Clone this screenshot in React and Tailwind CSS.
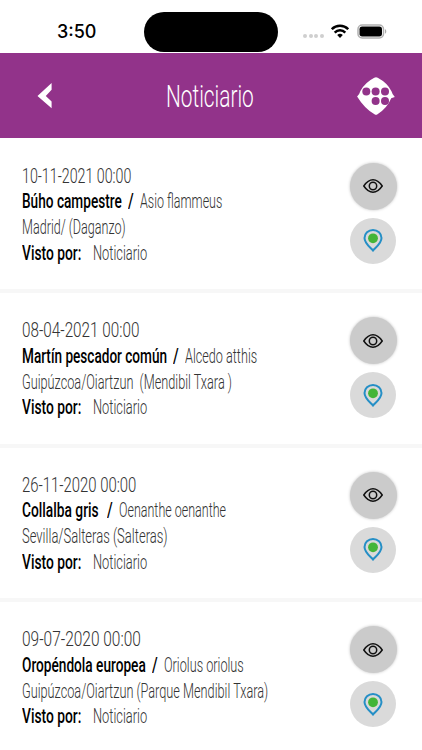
import { useLayoutEffect, useRef, useState } from "react";

const sightings = [
  {
    date: ["10-11-2021 00:00", 109.5],
    name: ["Búho campestre", 100],
    species: ["Asio flammeus", 82],
    place: ["Madrid/ (Daganzo)", 104],
    gap: 6,
  },
  {
    date: ["08-04-2021 00:00", 117.5],
    name: ["Martín pescador común", 145],
    species: ["Alcedo atthis", 72],
    place: ["Guipúzcoa/Oiartzun\u00a0 (Mendibil Txara )", 210],
    gap: 6,
  },
  {
    date: ["26-11-2020 00:00", 114.5],
    name: ["Collalba gris", 77],
    species: ["Oenanthe oenanthe", 107],
    place: ["Sevilla/Salteras (Salteras)", 145.5],
    gap: 8,
  },
  {
    date: ["09-07-2020 00:00", 119],
    name: ["Oropéndola europea", 124],
    species: ["Oriolus oriolus", 80],
    place: ["Guipúzcoa/Oiartzun (Parque Mendibil Txara)", 246.5],
    gap: 6,
  },
];

// Condenses a run of text to the given width
function Condensed({ text, width, className = "" }) {
  const ref = useRef(null);
  const [scale, setScale] = useState(0.7);

  useLayoutEffect(() => {
    setScale(width / ref.current.offsetWidth);
  }, [text, width]);

  return (
    <span className="block shrink-0" style={{ width }}>
      <span
        ref={ref}
        className={`inline-block origin-left whitespace-pre ${className}`}
        style={{ transform: `scaleX(${scale})` }}
      >
        {text}
      </span>
    </span>
  );
}

function StatusBar() {
  return (
    <div className="flex h-[53px] items-start bg-white">
      <div className="w-36 pt-[21px] pl-[57px] font-[Inter] text-[18px] leading-[22px] font-medium text-black">
        3:50
      </div>
      <div className="mt-3 h-10 w-[134px] rounded-full bg-black" />
      <div className="mt-[23px] ml-[25px] flex h-4 items-center">
        <div className="mt-[9px] flex gap-[1.700px]">
          <i className="size-[4px] rounded-full bg-[#cfcfcf]" />
          <i className="size-[4px] rounded-full bg-[#cfcfcf]" />
          <i className="size-[4px] rounded-full bg-[#cfcfcf]" />
          <i className="size-[4px] rounded-full bg-[#cfcfcf]" />
        </div>
        <svg className="ml-[7px] h-[14px] w-[18px]" viewBox="0 0 18 14" fill="none">
          <path d="M.8 5.200a11.600 11.600 0 0 1 16.400 0M3.700 8.600a7.400 7.400 0 0 1 10.600 0" stroke="#000" strokeWidth="2.5" />
          <path d="M9 13.900 6.200 11a4 4 0 0 1 5.600 0z" fill="#000" />
        </svg>
        <svg className="ml-[8px] h-[15px] w-[31px]" viewBox="0 0 31 15" fill="none">
          <rect x="1" y="1" width="25.500" height="13" rx="4.200" stroke="#b0b0b0" strokeWidth="1.500" />
          <rect x="2.500" y="2.600" width="22.500" height="9.800" rx="2.600" fill="#000" />
          <path d="M28 5.300c1.700.6 1.700 3.800 0 4.400z" fill="#aaa" />
        </svg>
      </div>
    </div>
  );
}

function Header() {
  return (
    <header className="flex h-[84.5px] items-center bg-[#92338a]">
      <svg className="mt-[1px] ml-[37px] h-[26px] w-[15px]" viewBox="0 0 15 26">
        <path d="M14.600 0v6.800L8.800 13l5.800 5.600v6.700L.5 13z" fill="#fff" />
      </svg>
      <div className="mt-[3px] ml-[114px] font-[Roboto] text-[31px] leading-10 font-light text-white">
        <Condensed text="Noticiario" width={88} />
      </div>
      <svg className="mt-[2px] ml-[103px] h-[38px] w-[38px]" viewBox="0 0 38 38">
        <path
          d="M17.300.8Q19-.3 20.700.8Q30.500 6 34.600 14.500Q35.300 17.500 37.800 20L34.200 21.300Q30 31.500 20.500 37.200Q19 38.200 17.500 37.200Q7.500 31.500.1 19.400Q2.500 17.500 3.400 14Q8 5.500 17.300.8z"
          fill="#fff"
        />
        <g fill="#92338a">
          <circle cx="9.300" cy="14.600" r="4" />
          <circle cx="18.600" cy="14.600" r="4" />
          <circle cx="28" cy="14.600" r="4" />
          <circle cx="18.600" cy="24" r="4" />
          <circle cx="28" cy="24" r="4" />
        </g>
      </svg>
    </header>
  );
}

function Sighting({ item }) {
  return (
    <article className="flex h-[154.5px] shrink-0 justify-between border-b-4 border-[#f7f7f7] bg-white pr-[25.5px] pl-[22px]">
      <div className="pt-[25px] font-[Roboto] text-[19.5px] leading-[25.8px] font-light text-[#333]">
        <Condensed text={item.date[0]} width={item.date[1]} />
        <div className="flex">
          <Condensed text={item.name[0]} width={item.name[1]} className="font-medium text-black" />
          <span style={{ width: item.gap }} />
          <Condensed text="/" width={6} className="font-medium text-black" />
          <span className="w-[6px]" />
          <Condensed text={item.species[0]} width={item.species[1]} />
        </div>
        <Condensed text={item.place[0]} width={item.place[1]} />
        <div className="flex gap-[11px]">
          <Condensed text="Visto por:" width={59.5} className="font-medium text-black" />
          <Condensed text="Noticiario" width={54} />
        </div>
      </div>

      <div className="flex flex-col items-center gap-[8px] pt-[24px]">
        <button className="flex size-[47px] items-center justify-center rounded-full bg-[#cbcbcb] shadow-[0_0_3px_rgba(0,0,0,0.25)]">
          <svg className="h-[14px] w-[20px]" viewBox="0 0 20 14" fill="none" stroke="#111" strokeWidth="1.5">
            <path d="M.8 7Q5 .8 10 .8T19.200 7Q15 13.200 10 13.200T.8 7z" />
            <circle cx="10" cy="7" r="3.700" />
          </svg>
        </button>
        <button className="flex size-[46px] items-center justify-center rounded-full bg-[#dadada]">
          <svg className="h-[23px] w-[20px]" viewBox="0 0 20 23" fill="none">
            <path
              d="M10 21.500C7.500 18.600 1.500 14.500 1.500 9a8.500 8 0 0 1 17 0c0 5.500-6 9.600-8.500 12.500z"
              stroke="#258fc6"
              strokeWidth="2"
            />
            <circle cx="10" cy="9.300" r="4.900" fill="#43b538" />
          </svg>
        </button>
      </div>
    </article>
  );
}

export default function App() {
  return (
    <div className="flex h-[750px] w-[422px] flex-col overflow-hidden bg-white">
      <StatusBar />
      <Header />
      <main className="flex min-h-0 flex-1 flex-col overflow-hidden pt-[1px]">
        {sightings.map((item) => (
          <Sighting key={item.date[0]} item={item} />
        ))}
      </main>
    </div>
  );
}
